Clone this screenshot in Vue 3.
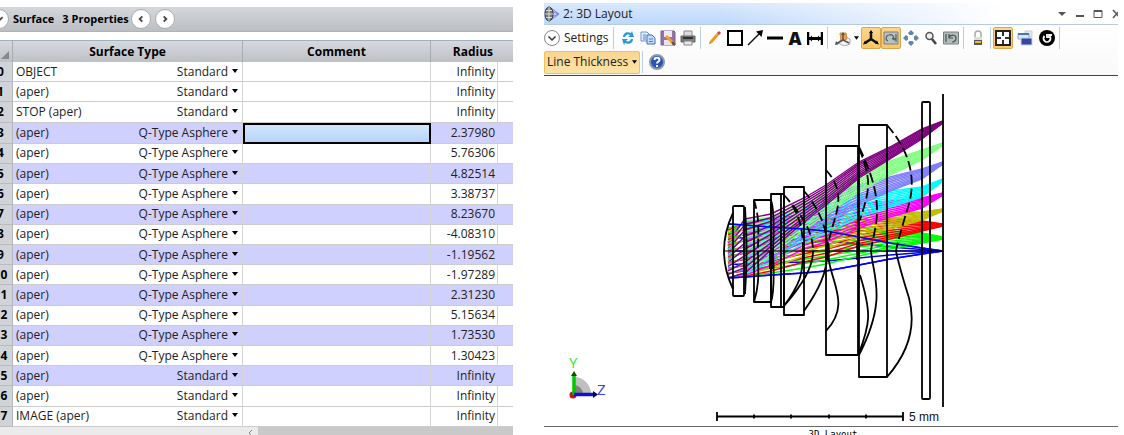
<script setup>
const types = ['Standard', 'Q-Type Asphere']

const surfaces = [
  ['OBJECT', 0, 'Infinity'],
  ['(aper)', 0, 'Infinity'],
  ['STOP (aper)', 0, 'Infinity'],
  ['(aper)', 1, '2.37980'],
  ['(aper)', 1, '5.76306'],
  ['(aper)', 1, '4.82514'],
  ['(aper)', 1, '3.38737'],
  ['(aper)', 1, '8.23670'],
  ['(aper)', 1, '-4.08310'],
  ['(aper)', 1, '-1.19562'],
  ['(aper)', 1, '-1.97289'],
  ['(aper)', 1, '2.31230'],
  ['(aper)', 1, '5.15634'],
  ['(aper)', 1, '1.73530'],
  ['(aper)', 1, '1.30423'],
  ['(aper)', 0, 'Infinity'],
  ['(aper)', 0, 'Infinity'],
  ['IMAGE (aper)', 0, 'Infinity'],
].map(([name, type, radius], i) => ({
  name,
  type: types[type],
  radius,
  shaded: i > 2 && i % 2 === 1 && i < 17,
  active: i === 3,
}))

// Each field: colour, then [centre, half height] of its ray bundle
// at successive planes along the optical axis.
const planes = [728, 745, 771, 804, 826, 859, 890, 922, 943]
const fields = [
  { color: '#0000ff', at: [[251, 27], [251, 26], [251, 24], [251, 22], [251, 20], [251, 14], [251, 8], [251, 3], [251, 0]] },
  { color: '#00ff00', at: [[253, 25], [250, 26], [249, 24], [246, 22], [244, 20], [242, 14], [240, 9], [238, 5], [238, 1]] },
  { color: '#ff0000', at: [[254, 24], [250, 26], [247, 24], [241, 21], [238, 19], [233, 13], [229, 10], [226, 5], [225, 1]] },
  { color: '#c0c000', at: [[255, 23], [249, 26], [245, 23], [236, 20], [232, 17], [225, 12], [221, 8], [216, 4], [210, 1]] },
  { color: '#ff00ff', at: [[256, 22], [249, 26], [243, 22], [231, 18], [226, 16], [216, 12], [209, 8], [203, 5], [194, 1]] },
  { color: '#00ffff', at: [[257, 21], [248, 26], [241, 21], [226, 17], [219, 14], [206, 11], [199, 8], [192, 5], [180, 1]] },
  { color: '#8080ff', at: [[258, 20], [247, 26], [239, 20], [221, 16], [211, 13], [195, 10], [184, 7], [174, 5], [163, 1]] },
  { color: '#80ff80', at: [[259, 19], [247, 26], [236, 19], [216, 14], [203, 12], [183, 9], [168, 7], [155, 5], [144, 1]] },
  { color: '#800080', at: [[260, 18], [246, 27], [232, 18], [210, 12], [195, 10], [170, 8], [153, 6], [134, 5], [122, 1]] },
]
const pupils = [-1, -0.8, -0.6, -0.36, -0.12, 0.12, 0.36, 0.6, 0.8, 1]
const axialPupils = [-1, -0.5, 0, 0.5, 1]

const trace = (field, p) => ({
  color: field.color,
  points: field.at.map(([c, h], j) => `${planes[j]},${Math.round((c + h * p) * 10) / 10}`).join(' '),
})
const [axial, ...oblique] = fields
const rays = [
  ...axialPupils.map((p) => trace(axial, p)),
  ...pupils.flatMap((p) => oblique.map((f) => trace(f, p))),
  trace(axial, -1),
  trace(axial, 1),
]
</script>

<template>
  <main class="page">
    <section class="editor">
      <header class="bar">
        <button class="round" aria-label="Expand surface">
          <svg viewBox="0 0 20 20"><path d="M6 8l4 4 4-4" /></svg>
        </button>
        <span class="caption">Surface</span>
        <span class="caption props">3 Properties</span>
        <button class="round" aria-label="Previous surface">
          <svg viewBox="0 0 20 20"><path d="M11.500 7L8.500 10l3 3" /></svg>
        </button>
        <button class="round" aria-label="Next surface">
          <svg viewBox="0 0 20 20"><path d="M8.500 7l3 3-3 3" /></svg>
        </button>
      </header>

      <table class="lens">
        <colgroup>
          <col class="c-num" /><col class="c-type" /><col /><col class="c-rad" /><col class="c-tail" />
        </colgroup>
        <thead>
          <tr>
            <th class="corner"><i></i></th>
            <th scope="col">Surface Type</th>
            <th scope="col">Comment</th>
            <th scope="col" class="rad-head" colspan="2">Radius</th>
          </tr>
        </thead>
        <tbody>
          <tr v-for="(s, i) in surfaces" :key="i" :class="{ shaded: s.shaded }">
            <th scope="row">{{ i }}</th>
            <td>
              <div class="kind">
                <span>{{ s.name }}</span>
                <select :aria-label="'Type of surface ' + i" :value="s.type">
                  <option v-for="t in types" :key="t">{{ t }}</option>
                </select>
              </div>
            </td>
            <td :class="{ active: s.active }"><input type="text" :aria-label="'Comment on surface ' + i" /></td>
            <td class="radius">{{ s.radius }}</td>
            <td></td>
          </tr>
        </tbody>
      </table>
      <div class="scroll"><svg viewBox="0 0 8 10"><path d="M6 2L3 5l3 3" /></svg><i></i></div>
    </section>

    <section class="layout">
      <header class="title">
        <svg class="logo" viewBox="0 0 16 16">
          <path d="M7 2l8 6-8 6M7 5l8 3-8 3" fill="#c8d0ff" stroke="#7584d8" />
          <ellipse cx="5" cy="8" rx="4" ry="7" fill="#777" stroke="#333" />
          <path d="M5 1v14M1 8h8M2 4.500h6M2 11.500h6" stroke="#ddd" fill="none" />
        </svg>
        <h1>2: 3D Layout</h1>
        <button aria-label="Window menu"><svg viewBox="0 0 12 12"><path d="M2 4h8L6 8z" fill="#555" /></svg></button>
        <button aria-label="Minimize"><svg viewBox="0 0 12 12"><path d="M2 8h8" stroke="#555" stroke-width="2" /></svg></button>
        <button aria-label="Maximize"><svg viewBox="0 0 12 12"><path d="M2 2.500h8v7H2z" fill="none" stroke="#555" /><path d="M2 3h8" stroke="#555" stroke-width="2" /></svg></button>
        <button class="close" aria-label="Close"><svg viewBox="0 0 12 12"><path d="M3 2l7 8M10 2l-7 8" stroke="#555" stroke-width="1.500" /></svg></button>
      </header>

      <div class="tools">
        <div class="strip">
          <button class="settings">
            <svg viewBox="0 0 18 18"><circle cx="9" cy="9" r="7.500" fill="#fff" stroke="#888" /><path d="M5.500 7.500L9 11l3.500-3.500" fill="none" stroke="#333" stroke-width="1.500" /></svg>
            Settings
          </button>
          <i class="sep"></i>
          <button class="tool" aria-label="Update">
            <svg viewBox="0 0 16 16" fill="#279bd3"><path d="M3 7c0-4 4-6 8-4l1-2 2 6-6 0 2-2C7 4 6 5 5 7z" /><path d="M13 9c0 4-4 6-8 4l-1 2-2-6 6 0-2 2c3 1 4 0 5-2z" /></svg>
          </button>
          <button class="tool" aria-label="Copy">
            <svg viewBox="0 0 16 16"><path d="M1 2h6l2 2v7H1z" fill="#e3efff" stroke="#6c91c5" /><path d="M7 5h5l3 3v6H7z" fill="#c5dcff" stroke="#3e73b8" /><path d="M3 5h3M3 7h3M3 9h3M9 9h4M9 11.500h4" stroke="#4d82c6" /></svg>
          </button>
          <button class="tool" aria-label="Save">
            <svg viewBox="0 0 16 16"><path d="M1 1h13l1 1v13H1z" fill="#9274ad" stroke="#7b5d98" /><path d="M4 1h8v6H4z" fill="#eee8f5" /><path d="M4 10h8v5H4z" fill="#e8e4ef" /><path d="M6 6l7 7" stroke="#f2a21e" stroke-width="3" /><path d="M12 12l3 3" stroke="#754a20" stroke-width="2" /></svg>
          </button>
          <button class="tool" aria-label="Print">
            <svg viewBox="0 0 16 16"><path d="M4 1h8v6H4z" fill="#ddd" stroke="#888" /><path d="M1 6h14v6H1z" fill="#777" stroke="#666" /><path d="M3 8h10" stroke="#333" stroke-width="2" /><path d="M4 11h8v4H4z" fill="#e8e8e8" stroke="#888" /><path d="M12 10h2" stroke="#59d35b" /></svg>
          </button>
          <i class="sep"></i>
          <button class="tool" aria-label="Pencil">
            <svg viewBox="0 0 16 16"><path d="M4 12l7-8" stroke="#ef9a22" stroke-width="3" /><path d="M11 4l2-2" stroke="#cf4050" stroke-width="3" /><path d="M2 14l1-3 2 2z" fill="#bd7a35" /></svg>
          </button>
          <button class="tool" aria-label="Rectangle">
            <svg viewBox="0 0 16 16"><path d="M1 1h14v14H1z" fill="#fff" stroke="#000" stroke-width="2" /></svg>
          </button>
          <button class="tool" aria-label="Arrow">
            <svg viewBox="0 0 16 16"><path d="M1 15L12 4" stroke="#111" stroke-width="1.500" /><path d="M16 0l-1.500 7L9 1.500z" /></svg>
          </button>
          <button class="tool" aria-label="Line">
            <svg viewBox="0 0 16 16"><path d="M0 8h16" stroke="#000" stroke-width="3" /></svg>
          </button>
          <button class="tool letter" aria-label="Text">A</button>
          <button class="tool" aria-label="Dimension">
            <svg viewBox="0 0 16 16"><path d="M1 2v13M15 2v13" stroke="#000" stroke-width="2.500" /><path d="M2 8.500h12" stroke="#000" stroke-width="3" /><path d="M2 8.500l3-3v6zM14 8.500l-3-3v6z" /></svg>
          </button>
          <i class="sep"></i>
          <button class="tool drop" aria-label="View orientation">
            <svg viewBox="0 0 16 16"><path d="M9 6l6 3v5l-6 2-6-3z" fill="#f2f2f2" stroke="#aaa" /><path d="M5 3l6 0 1 6-6 2z" fill="#f0a04a" stroke="#d78a35" /><path d="M8 5v5l-7 4M8 10l6 3" stroke="#555" stroke-width="1.500" fill="none" /><path d="M6 5l2-3 2 3zM0 15l1-4 3 3z" fill="#555" /></svg>
            <svg class="caret" viewBox="0 0 6 4"><path d="M0 0h6L3 4z" /></svg>
          </button>
          <button class="tool on" aria-label="Axis" aria-pressed="true">
            <svg viewBox="0 0 16 16"><path d="M8 2v7l-6 4M8 9l6 4" fill="none" stroke="#111" stroke-width="2.500" /><path d="M8 0l2 3H6zM0 14.500l2-4 2 3zM16 14.500l-2-4-2 3z" /></svg>
          </button>
          <button class="tool on" aria-label="Rotate" aria-pressed="true">
            <svg viewBox="0 0 16 16"><path d="M1 2h14v12H1z" fill="#b8c2c2" stroke="#77827f" /><path d="M5 11c-3-1-2-6 1-6 3-1 5 1 5 4M9 8l2 2 2-2M13 4v8" fill="none" stroke="#56615f" stroke-width="1.200" /></svg>
          </button>
          <button class="tool" aria-label="Pan">
            <svg viewBox="0 0 16 16" fill="#6484a8"><path d="M8 0l3 3-1.500 2h-3L5 3zM8 16l3-3-1.500-2h-3L5 13zM0 8l3-3 2 1.500v3L3 11zM16 8l-3-3-2 1.500v3l2 1.500z" /></svg>
          </button>
          <button class="tool" aria-label="Zoom">
            <svg viewBox="0 0 16 16"><circle cx="6.500" cy="6" r="3.500" fill="#eee" stroke="#555" stroke-width="1.500" /><path d="M9 9l4 5" stroke="#444" stroke-width="2.500" /></svg>
          </button>
          <button class="tool" aria-label="Reset view">
            <svg viewBox="0 0 16 16"><path d="M0.500 2h15v12h-15z" fill="#b2bdbb" stroke="#75827f" /><path d="M3 4v8M6 7c3-3 7-2 7 1 0 2-1 4-4 4M6 4v4h4" fill="none" stroke="#46524f" stroke-width="1.200" /></svg>
          </button>
          <i class="sep"></i>
          <button class="tool" aria-label="Lock">
            <svg viewBox="0 0 16 16"><path d="M5 8V4c0-4 6-4 6 0v4" fill="none" stroke="#aaa" stroke-width="1.500" /><path d="M4 7h8v4H4z" fill="#ddd" /><path d="M4 10h8v5H4z" fill="#555" /><path d="M5 12h6" stroke="#e9bd27" stroke-width="2" /></svg>
          </button>
          <i class="sep tight"></i>
          <button class="tool on" aria-label="Fit to window" aria-pressed="true">
            <svg viewBox="0 0 16 16"><path d="M1 1h14v14H1z" fill="#fff" stroke="#222" stroke-width="2" /><path d="M8 2v4M8 10v4M2 8h4M10 8h4" stroke="#333" stroke-width="2" /></svg>
          </button>
          <button class="tool wide" aria-label="Window size">
            <svg viewBox="0 0 16 16"><path d="M8 1h7v6H8z" fill="#e2e6ec" stroke="#ccc" /><path d="M1 4h11v5H1z" fill="#dde8f5" stroke="#8fabd0" /><path d="M1 4h11" stroke="#427ac2" stroke-width="2" /><path d="M4 8h11v7H4z" fill="#3346a8" stroke="#ccd3e6" /></svg>
          </button>
          <button class="tool" aria-label="Refresh options">
            <svg viewBox="0 0 16 16"><circle cx="8" cy="8" r="8" /><path d="M5.500 6a3.500 3.500 0 1 0 5 0M8 4v4M10 8V5h3" fill="none" stroke="#fff" stroke-width="1.800" /></svg>
          </button>
          <i class="sep"></i>
        </div>
        <div class="strip second">
          <button class="thickness">Line Thickness <svg class="caret" viewBox="0 0 6 4"><path d="M0 0h6L3 4z" /></svg></button>
          <i class="sep"></i>
          <button class="tool" aria-label="Help">
            <svg viewBox="0 0 16 16"><circle cx="8" cy="8" r="7" fill="#2853b8" stroke="#8e99ab" stroke-width="2" /><path d="M5.500 6c0-3 5-3 5 0 0 1.500-2.500 1.500-2.500 3.500M8 11v2" fill="none" stroke="#fff" stroke-width="2" /></svg>
          </button>
        </div>
      </div>

      <svg class="plot" viewBox="544 76 574 350" role="img" aria-label="Lens cross section with ray bundles">
        <g fill="none" stroke-width="1.400">
          <polyline v-for="(r, i) in rays" :key="i" :points="r.points" :stroke="r.color" />
        </g>
        <g fill="none" stroke="#000" stroke-width="1.800" stroke-linejoin="round">
          <path d="M724 251H943" stroke-width="1.200" />
          <rect x="733" y="206" width="11" height="90" rx="1" />
          <path d="M733 213Q715 251 733 289M745 207Q748 251 745 294" />
          <rect x="754" y="200" width="17" height="102" />
          <path d="M754 200C760 220 758 230 758 251" stroke-dasharray="9 4" />
          <path d="M758 251C758 272 760 282 754 302M771 302Q775 290 773 251Q775 212 771 200" />
          <rect x="771" y="194" width="13" height="113" />
          <path d="M781 194V307" />
          <path d="M771 251v18" stroke-width="4" />
          <rect x="784" y="187" width="20" height="128" />
          <path d="M784 195C800 212 803 230 803 251M784 195C806 219 813 235 813 251M804 191C820 210 828 230 827 251" stroke-dasharray="9 4" />
          <path d="M803 251C803 275 800 284 784 306M813 251C813 267 803 284 784 306M827 251C828 272 818 291 804 311" />
          <rect x="826" y="146" width="32" height="209" />
          <path d="M826 170C848 194 835 214 830 236Q828 244 829 251" stroke-dasharray="9 4" />
          <path d="M829 251Q828 258 830 266C835 288 848 308 826 331" />
          <path d="M827 242v18M858 242v18" stroke-width="3.500" />
          <path d="M859 148C872 182 870 188 860 220M859 147C888 206 874 226 871 251M887 125C915 157 914 185 909 204Q899 236 896 251" stroke-dasharray="10 4" />
          <path d="M860 275C872 314 870 324 859 353M871 251C873 276 888 299 859 355M896 251Q899 266 909 298C914 317 915 345 887 377" />
          <rect x="859" y="125" width="28" height="252" />
          <rect x="922" y="102" width="8" height="297" rx="1" />
          <path d="M943 94V407M717 416.500H903" />
          <path d="M717 412v9M903 412v9M754 414.500v4M791 414.500v4M829 414.500v4M866 414.500v4" />
        </g>
        <text x="909" y="421" class="unit">5 mm</text>
        <g>
          <path d="M574 377a17 17 0 0 1 17 17H574z" fill="#c0c0c0" />
          <path d="M574 385a9 9 0 0 1 9 9H574z" fill="#808080" />
          <circle cx="573" cy="395" r="3.500" fill="#d01010" />
          <path d="M574 395V375" stroke="#00c800" stroke-width="3.500" />
          <path d="M571 376l3-5 3 5z" fill="#064d06" />
          <path d="M574 394.500h20" stroke="#1010d0" stroke-width="3.500" />
          <path d="M593 391l5 3.500-5 3.500z" fill="#000060" />
          <text x="569" y="368" class="axis y">Y</text>
          <text x="597" y="395" class="axis z">Z</text>
        </g>
      </svg>
      <footer class="foot">3D Layout</footer>
    </section>
  </main>
</template>

<style>
body { background: #fff; }
</style>

<style scoped>
* { box-sizing: border-box; }
.page {
  display: grid;
  grid-template-columns: 513fr 574fr;
  column-gap: 31px;
  height: 100vh;
  padding-right: 6px;
  overflow: hidden;
  font: 12px/16px "Open Sans", "Noto Sans", sans-serif;
  color: #222;
}
button, input, select { font: inherit; color: inherit; margin: 0; padding: 0; border: 0; background: none; }
svg { display: block; }

.editor { overflow: hidden; padding-top: 7px; min-width: 0; }
.bar {
  display: flex;
  align-items: center;
  height: 25px;
  margin-left: -11px;
  background: linear-gradient(#d4d8dc, #bbbfc4);
  border-bottom: 1px solid #aab4be;
}
.round { flex: none; width: 20px; height: 20px; border-radius: 50%; border: 1px solid #aaa; background: #fff; margin-right: 4px; }
.round svg { width: 18px; height: 18px; }
.round path { fill: none; stroke: #444; stroke-width: 2; }
.caption { font-weight: 700; font-size: 11px; color: #000; }
.props { margin: 0 2px 0 8px; }

.lens {
  width: calc(100% + 11px);
  height: 387px;
  margin: 8px 0 0 -11px;
  table-layout: fixed;
  border-collapse: separate;
  border-spacing: 0;
  border-top: 1px solid #9fb0c0;
}
.c-num { width: 24px; }
.c-type { width: 230px; }
.c-rad { width: 67px; }
.c-tail { width: 15px; }
th, td { padding: 0; line-height: 18px; overflow: hidden; }
thead th {
  height: 21px;
  color: #000;
  background: linear-gradient(#d6d9dd, #bdc1c6);
  border-right: 1px solid #a9adb2;
}
thead .rad-head { text-align: right; padding-right: 20px; border-right: 0; }
.corner i { display: block; margin: 6px 2px 0 12px; border: 4px solid #888; border-top-color: transparent; border-left-color: transparent; width: 8px; height: 8px; }
tbody th { background: #d0d4d9; border-right: 1px solid #b4b8bd; border-bottom: 1px solid #bbb; color: #000; }
td { border-right: 1px solid #d4d4d4; border-bottom: 1px solid #ccc; }
td:last-child { border-right: 0; }
.shaded td { background: #d0d0ff; }
.kind { display: flex; justify-content: space-between; align-items: center; padding: 0 4px 0 3px; position: relative; }
.kind select { appearance: none; text-align-last: right; padding-right: 10px; height: 18px; line-height: 18px; color: #222; }
.kind::after { content: ""; position: absolute; right: 4px; top: 6px; border: 3px solid transparent; border-top: 4px solid #000; border-bottom: 0; }
td input { display: block; width: 100%; height: 16px; }
.shaded .active { border: 2px solid #000; background: linear-gradient(#d4e6fc, #b4d4fa); }
.radius { text-align: right; padding-right: 2px; }
.scroll { display: flex; height: 16px; background: #ebebeb; }
.scroll svg { flex: none; width: 8px; height: 10px; margin: 1px 4px 0 257px; margin-left: 246px; fill: none; stroke: #888; }
.scroll i { flex: 1; background: #c9c9c9; }

.layout { min-width: 0; padding-top: 3px; }
.title {
  display: flex;
  align-items: center;
  height: 22px;
  background: linear-gradient(90deg, transparent 30%, #fff 80%), linear-gradient(#d9e8fc, #bdd8fb);
  border-bottom: 1px solid #b5cbe5;
  overflow: hidden;
}
.logo { width: 16px; height: 16px; }
h1 { flex: 1; margin: 0 0 0 3px; font-size: 12px; font-weight: 400; }
.title button { width: 12px; height: 12px; margin-right: 6px; }
.title .close { margin-right: -4px; }
.tools { height: 51px; border-bottom: 1px solid #444; background: linear-gradient(#fff, #f9f9f9); }
.strip { display: flex; align-items: center; height: 26px; }
.second { height: 22px; }
.sep { width: 1px; height: 22px; flex: none; margin: 0 4px 0 2px; background: #b9cfe6; }
.tight { margin: 0 2px; }
.settings { display: flex; align-items: center; gap: 3px; width: 67px; white-space: nowrap; }
.settings svg { flex: none; width: 18px; height: 18px; margin-left: -1px; }
.tool { flex: none; display: flex; align-items: center; justify-content: center; width: 20px; height: 22px; }
.tool svg { width: 16px; height: 16px; }
.wide { width: 24px; }
.drop { width: 29px; gap: 3px; }
.tool .caret, .caret { width: 5px; height: 4px; }
.letter { font: 900 18px/20px "Open Sans", sans-serif; color: #111; }
.on, .thickness { background: linear-gradient(#fcd58c, #fbc667); border: 1px solid #d9a64e; border-radius: 2px; }
.thickness { display: flex; align-items: center; gap: 4px; height: 23px; width: 96px; padding-left: 2px; background: linear-gradient(#fbd58f, #fde3a6); border-color: #f2bf58; white-space: nowrap; }
.plot { width: 100%; height: auto; }
.unit { font: 12px "Liberation Sans", Arial, sans-serif; fill: #111; }
.axis { font: 15px "Open Sans", sans-serif; }
.y { fill: #2be32b; }
.z { fill: #3c3cff; }
.foot { border-top: 1px solid #666; padding: 1px 0 0 4px; text-align: center; font: 9px/12px "DejaVu Sans Mono", monospace; color: #000; }
</style>
